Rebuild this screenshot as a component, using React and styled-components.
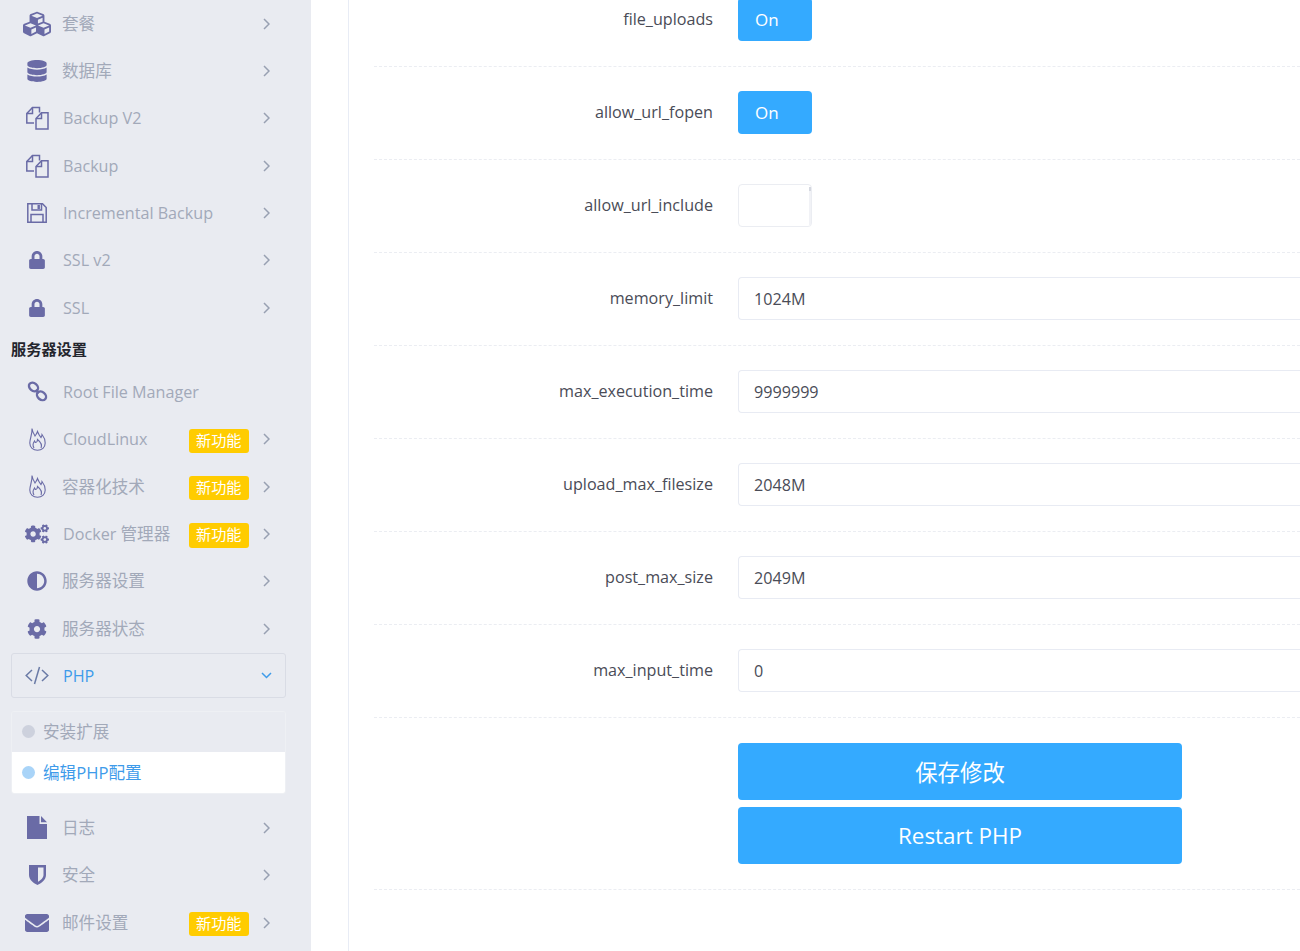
import React from 'react'
import styled, { createGlobalStyle } from 'styled-components'
import { FaCubes, FaDatabase, FaLock, FaCogs, FaAdjust, FaCog, FaEnvelope } from 'react-icons/fa'

const GlobalStyle = createGlobalStyle`
    html, body {
        margin: 0;
        padding: 0;
        height: 951px;
        overflow: hidden;
        background: #fff;
    }
    body {
        font-family: "Open Sans", "Noto Sans CJK SC", sans-serif;
        font-size: 16.15px;
    }
`

const Page = styled.div`
    display: flex;
    width: 1300px;
    height: 951px;
    overflow: hidden;
`
const Sidebar = styled.nav`
    flex: 0 0 311px;
    background: #e9ebf1;
    padding: 0 25px 0 11px;
    box-sizing: border-box;
`
const Row = styled.div`
    display: flex;
    align-items: center;
    height: 47.33px;
    padding: 0 16px 0 11px;
    color: #a2a9b9;
`
const IconSlot = styled.span`
    flex: 0 0 30px;
    width: 30px;
    display: flex;
    justify-content: center;
    color: #6a6ba6;
    font-size: ${p => p.$size || 23}px;
    svg {
        display: block;
    }
`
const RowLabel = styled.span`
    flex: 1;
    margin-left: ${p => (p.$cjk ? 10 : 11)}px;
    line-height: 22px;
    white-space: nowrap;
`
const Cjk = styled.span`
    font-size: 16.6px;
`
const Badge = styled.span`
    flex: 0 0 60.5px;
    height: 24.5px;
    margin-right: 14px;
    margin-top: 3px;
    background: #fc0;
    border-radius: 3px;
    color: #fff;
    font-size: 15.2px;
    line-height: 23px;
    text-align: center;
`
const Arrow = styled.svg`
    flex: 0 0 7px;
    width: 7px;
    height: 12px;
    fill: none;
    stroke: #98a0b2;
    stroke-width: 1.5;
`
const DownArrow = styled.svg`
    flex: 0 0 11px;
    width: 11px;
    height: 7px;
    fill: none;
    stroke: #3e9bea;
    stroke-width: 1.5;
`
const Heading = styled.div`
    height: 37px;
    line-height: 37px;
    color: #23252d;
    font-size: 15.2px;
    font-weight: 700;
`
const ActiveRow = styled(Row)`
    height: 43px;
    margin-top: 1px;
    margin-bottom: 13px;
    border: 1px solid #d9dce5;
    border-radius: 3px;
    color: #3e9bea;
    padding: 0 13px 0 10px;
`
const SubMenu = styled.div`
    border: 1px solid #eef0f4;
    border-radius: 3px;
    margin-bottom: 10px;
    overflow: hidden;
`
const SubItem = styled.div`
    display: flex;
    align-items: center;
    height: ${p => (p.$active ? 41 : 40)}px;
    line-height: 22px;
    padding-left: 10px;
    background: ${p => (p.$active ? '#fff' : '#e9ebf1')};
    color: ${p => (p.$active ? '#3e9bea' : '#a2a9b9')};
`
const Dot = styled.span`
    width: 13px;
    height: 13px;
    margin-right: 8px;
    margin-top: -1px;
    border-radius: 50%;
    background: ${p => (p.$active ? '#a9d4f8' : '#cdd1dd')};
`
const Gutter = styled.div`
    flex: 0 0 37px;
    background: #fff;
    border-right: 1px solid #e8ecf5;
`
const Main = styled.main`
    flex: 1;
    padding: 0 0 0 25px;
    min-width: 0;
`
const Form = styled.div`
    margin-top: -26px;
`
const FormRow = styled.div`
    display: flex;
    height: 92px;
    align-items: center;
    border-bottom: 1px dashed #ebedf2;
`
const FieldLabel = styled.label`
    flex: 0 0 339px;
    margin-right: 25px;
    margin-top: -2px;
    text-align: right;
    color: #4a4c57;
`
const Toggle = styled.div`
    box-sizing: border-box;
    position: relative;
    width: 74px;
    height: 43px;
    margin-top: -2px;
    padding-left: 17px;
    border-radius: 4px;
    font-size: 17px;
    line-height: 43px;
    color: #fff;
    background: ${p => (p.$on ? '#34aaff' : '#fff')};
    border: ${p => (p.$on ? 'none' : '1px solid #ebedf2')};
    &::after {
        content: '';
        display: ${p => (p.$on ? 'none' : 'block')};
        position: absolute;
        top: 2px;
        right: 0;
        width: 2px;
        height: 38px;
        background: linear-gradient(#d5d8e0 0 4px, #f1f2f6 4px);
    }
`
const TextInput = styled.div`
    box-sizing: border-box;
    flex: 1;
    height: 43px;
    margin-top: -2px;
    padding-left: 15px;
    border: 1px solid #e8ebf3;
    border-right: none;
    border-radius: 4px 0 0 4px;
    line-height: 43px;
    color: #4a4c57;
`
const Actions = styled.div`
    display: flex;
    flex-direction: column;
    gap: 6.67px;
    padding: 25px 0 25px 364px;
    border-bottom: 1px dashed #ebedf2;
`
const ActionButton = styled.button`
    width: 444px;
    height: 57.33px;
    background: #34aaff;
    border: none;
    border-radius: 4px;
    color: #fff;
    font-family: inherit;
    font-size: 22.4px;
`

const RightArrow = () => (
    <Arrow viewBox="0 0 7 12">
        <path d="M1 1l5 5-5 5" />
    </Arrow>
)
// the next icons are FA4 shapes, the package only has the FA5 versions
const FilesIcon = () => (
    <svg width="25" height="24" viewBox="0 0 25 24" fill="none" stroke="currentColor" strokeWidth="1.5">
        <path d="M9 17H1.8V7.5L7.5 1.5H14.5V6.5" />
        <path d="M7.5 1.5V7.5H1.8" />
        <path d="M11 23V12.5L16.5 6.8H23V23Z" />
        <path d="M16.5 6.8V12.5H11" />
    </svg>
)
const SaveIcon = () => (
    <svg width="20" height="20" viewBox="0 0 20 20">
        <path fill="none" stroke="currentColor" strokeWidth="1.5" d="M.8.8H15.5L19.2 4.5V19.2H.8Z" />
        <path fill="none" stroke="currentColor" strokeWidth="1.5" d="M4 19V11.5H16V19" />
        <path fill="none" stroke="currentColor" strokeWidth="1.5" d="M5 1V7H14.5V1" />
        <rect x="10.5" y="2" width="2.4" height="4" fill="currentColor" />
    </svg>
)
const ChainIcon = () => (
    <svg width="21" height="21" viewBox="0 0 21 21" fill="none" stroke="currentColor" strokeWidth="2.4">
        <ellipse cx="6.5" cy="6" rx="5" ry="3.8" transform="rotate(40 6.5 6)" />
        <ellipse cx="14.5" cy="14.8" rx="5" ry="3.8" transform="rotate(40 14.5 14.8)" />
        <path d="M8.5 9l3.5 3" />
    </svg>
)
const FlameIcon = () => (
    <svg width="17" height="23" viewBox="0 0 17 23" fill="none" stroke="currentColor" strokeWidth="1.1" strokeLinejoin="miter">
        <path d="M3 .5C3.5 4 4.5 5.5 6 8C7 6.5 8 5.5 8.5 3.5C9.5 6 10.5 8 12 9.5C12.5 8.5 13 8 13 6.5C15 9 16.2 11.5 16.2 15C16.2 19.5 12.8 22.3 8.5 22.3C4.2 22.3 .8 19.5 .8 15C.8 10.5 3.5 6 3 .5Z" />
        <path d="M5 20C3.5 17.5 4 15 5.5 13C6 14.5 7 15 8 13.5C8.5 12.5 8.5 12 8.5 11.5C11 13.5 13.5 16.5 12 20" />
    </svg>
)
const CodeIcon = () => (
    <svg width="24" height="19" viewBox="0 0 24 19" fill="none" stroke="#6a7aa6" strokeWidth="1.5">
        <path d="M7 4L1.2 9.5L7 15" />
        <path d="M17 4L22.8 9.5L17 15" />
        <path d="M14.5 1L9.5 18" />
    </svg>
)
const FileIcon = () => (
    <svg width="20" height="23" viewBox="0 0 20 23" fill="currentColor">
        <path d="M0 0H12.5V8H20V23H0Z" />
        <path d="M14 0L20 6.2H14Z" />
    </svg>
)
const ShieldIcon = () => (
    <svg width="17" height="20" viewBox="0 0 17 20">
        <path fill="currentColor" fillRule="evenodd" d="M0 0H17V10C17 15 12 18.5 8.5 20C5 18.5 0 15 0 10ZM9 2.5V16.8C11.5 15.3 14.5 13 14.5 10V2.5Z" />
    </svg>
)

const Item = ({ icon, size, label, cjk, badge, plain }) => (
    <Row>
        <IconSlot $size={size}>{icon}</IconSlot>
        <RowLabel $cjk={cjk}>{cjk ? <Cjk>{label}</Cjk> : label}</RowLabel>
        {badge && <Badge>新功能</Badge>}
        {!plain && <RightArrow />}
    </Row>
)

const topItems = [
    { id: 'plans', icon: <FaCubes />, size: 28, label: '套餐', cjk: true },
    { id: 'db', icon: <FaDatabase />, size: 22, label: '数据库', cjk: true },
    { id: 'backup2', icon: <FilesIcon />, label: 'Backup V2' },
    { id: 'backup', icon: <FilesIcon />, label: 'Backup' },
    { id: 'incremental', icon: <SaveIcon />, label: 'Incremental Backup' },
    { id: 'ssl2', icon: <FaLock />, size: 18, label: 'SSL v2' },
    { id: 'ssl', icon: <FaLock />, size: 18, label: 'SSL' },
]
const serverItems = [
    { id: 'root', icon: <ChainIcon />, label: 'Root File Manager', plain: true },
    { id: 'cloud', icon: <FlameIcon />, label: 'CloudLinux', badge: true },
    { id: 'container', icon: <FlameIcon />, label: '容器化技术', cjk: true, badge: true },
    {
        id: 'docker',
        icon: <FaCogs />,
        size: 24,
        label: (
            <>
                Docker <Cjk>管理器</Cjk>
            </>
        ),
        badge: true,
    },
    { id: 'settings', icon: <FaAdjust />, size: 20, label: '服务器设置', cjk: true },
    { id: 'status', icon: <FaCog />, size: 20, label: '服务器状态', cjk: true },
]
const bottomItems = [
    { id: 'logs', icon: <FileIcon />, label: '日志', cjk: true },
    { id: 'security', icon: <ShieldIcon />, label: '安全', cjk: true },
    { id: 'mail', icon: <FaEnvelope />, size: 24, label: '邮件设置', cjk: true, badge: true },
]
const fields = [
    { name: 'file_uploads', on: true },
    { name: 'allow_url_fopen', on: true },
    { name: 'allow_url_include', on: false },
    { name: 'memory_limit', value: '1024M' },
    { name: 'max_execution_time', value: '9999999' },
    { name: 'upload_max_filesize', value: '2048M' },
    { name: 'post_max_size', value: '2049M' },
    { name: 'max_input_time', value: '0' },
]

export default function App() {
    return (
        <>
            <GlobalStyle />
            <Page>
                <Sidebar>
                    {topItems.map(item => (
                        <Item key={item.id} {...item} />
                    ))}
                    <Heading>服务器设置</Heading>
                    {serverItems.map(item => (
                        <Item key={item.id} {...item} />
                    ))}
                    <ActiveRow>
                        <IconSlot>
                            <CodeIcon />
                        </IconSlot>
                        <RowLabel>PHP</RowLabel>
                        <DownArrow viewBox="0 0 11 7">
                            <path d="M1 1l4.5 4.5L10 1" />
                        </DownArrow>
                    </ActiveRow>
                    <SubMenu>
                        <SubItem>
                            <Dot />
                            <Cjk>安装扩展</Cjk>
                        </SubItem>
                        <SubItem $active>
                            <Dot $active />
                            <Cjk>编辑PHP配置</Cjk>
                        </SubItem>
                    </SubMenu>
                    {bottomItems.map(item => (
                        <Item key={item.id} {...item} />
                    ))}
                </Sidebar>
                <Gutter />
                <Main>
                    <Form>
                        {fields.map(f => (
                            <FormRow key={f.name}>
                                <FieldLabel>{f.name}</FieldLabel>
                                {f.value === undefined ? (
                                    <Toggle $on={f.on}>{f.on ? 'On' : ''}</Toggle>
                                ) : (
                                    <TextInput>{f.value}</TextInput>
                                )}
                            </FormRow>
                        ))}
                        <Actions>
                            <ActionButton>保存修改</ActionButton>
                            <ActionButton>Restart PHP</ActionButton>
                        </Actions>
                    </Form>
                </Main>
            </Page>
        </>
    )
}
